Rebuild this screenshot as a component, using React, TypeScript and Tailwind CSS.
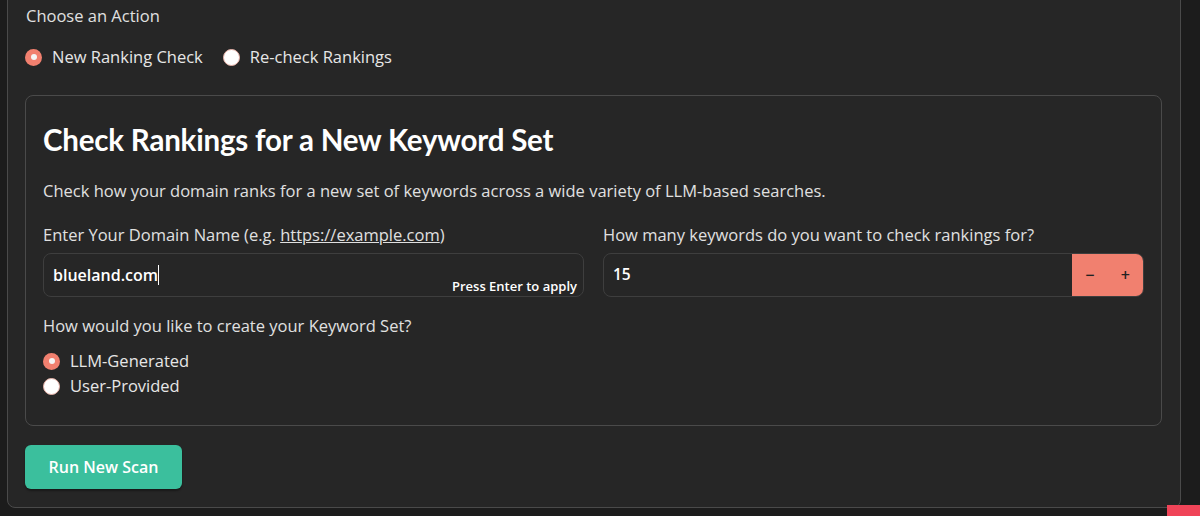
import { useState } from "react";

function Radio({ checked, label }: { checked: boolean; label: string }) {
  return (
    <label className="flex items-center gap-[10px] cursor-pointer">
      {checked ? (
        <span className="h-[17px] w-[17px] rounded-full bg-[#f1806f] flex items-center justify-center">
          <span className="h-[6px] w-[6px] rounded-full bg-[#f5f5f5]" />
        </span>
      ) : (
        <span className="h-[17px] w-[17px] rounded-full bg-white border border-[#e8b2a8]" />
      )}
      <span className="text-[#e6e6e6] leading-[24px]">{label}</span>
    </label>
  );
}

export default function App() {
  const [count] = useState(15);

  return (
    <div
      className="relative h-[516px] w-[1200px] overflow-hidden bg-[#1c1c1c] text-[16.5px]"
      style={{ fontFamily: '"Open Sans", "Noto Sans", sans-serif' }}
    >
      <div className="ml-[7px] w-[1174px] h-[518px] -mt-[10px] pt-[10px] bg-[#262626] border border-[#4a4a4a] rounded-b-[8px] pl-[17px] pr-[18px]">
        <div className="text-[#e0e0e0] leading-[24px] pt-[3px] pl-px">Choose an Action</div>

        <div className="flex items-center gap-[20px] mt-[17px]">
          <Radio checked label="New Ranking Check" />
          <Radio checked={false} label="Re-check Rankings" />
        </div>

        <div className="mt-[26px] h-[331px] border border-[#4a4a4a] rounded-[8px] px-[17px] pt-[24px]">
          <h1
            className="text-[29.5px] font-bold text-white leading-[40px] tracking-[-0.2px]"
            style={{ fontFamily: "Lato, sans-serif" }}
          >
            Check Rankings for a New Keyword Set
          </h1>
          <p className="mt-[19px] text-[#e0e0e0] leading-[24px]">
            Check how your domain ranks for a new set of keywords across a wide variety of LLM-based searches.
          </p>

          <div className="mt-[21px] grid grid-cols-2 gap-[19px]">
            <div>
              <div className="text-[#e0e0e0] leading-[22px]">
                Enter Your Domain Name (e.g. <span className="underline">https://example.com</span>)
              </div>
              <div className="mt-[7px] relative h-[44px] rounded-[8px] border border-[#3e3e3e] bg-[#262626] flex items-center px-[9px]">
                <span className="text-[16px] text-white font-semibold">blueland.com</span>
                <span className="w-px h-[20px] bg-white" />
                <span className="absolute right-[6px] bottom-0 text-[13px] font-semibold text-white">
                  Press Enter to apply
                </span>
              </div>
            </div>
            <div>
              <div className="text-[#e0e0e0] leading-[22px]">
                How many keywords do you want to check rankings for?
              </div>
              <div className="mt-[7px] h-[44px] rounded-[8px] border border-[#3e3e3e] flex overflow-hidden">
                <div className="flex-1 flex items-center px-[9px] text-[15.5px] text-white font-semibold">{count}</div>
                <div className="w-[71px] bg-[#f1806f] flex items-center text-[#222] text-[16px] font-semibold">
                  <button className="flex-1 text-center">−</button>
                  <button className="flex-1 text-center">+</button>
                </div>
              </div>
            </div>
          </div>

          <div className="mt-[18px] text-[#e0e0e0] leading-[22px]">
            How would you like to create your Keyword Set?
          </div>
          <div className="mt-[12px] flex flex-col gap-px">
            <Radio checked label="LLM-Generated" />
            <Radio checked={false} label="User-Provided" />
          </div>
        </div>

        <button className="mt-[19px] h-[44px] w-[157px] rounded-[6px] bg-[#3bbf9d] text-white text-[16px] font-semibold shadow-[0_2px_2px_rgba(0,0,0,0.35)]">
          Run New Scan
        </button>
      </div>

      <div className="absolute right-0 bottom-0 w-[33px] h-[11px] bg-[#f04458]" />
    </div>
  );
}
